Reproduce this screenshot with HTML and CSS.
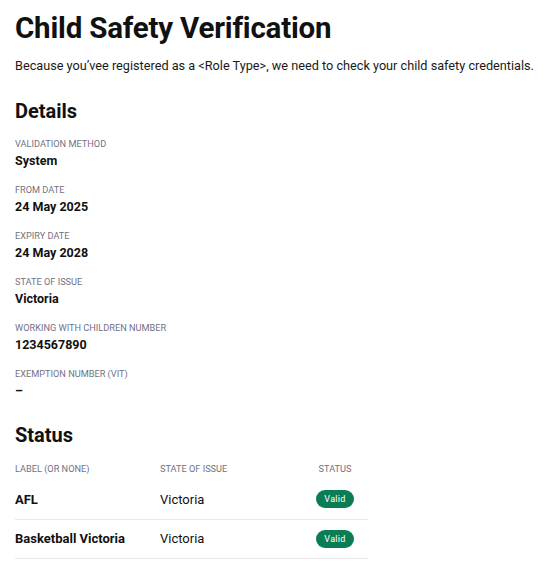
FILE: index.html
```html
<!DOCTYPE html>
<html>
<head>
<meta charset="utf-8">
<link rel="stylesheet" href="styles.css">
</head>
<body>
<main class="page">
  <h1 class="title">Child Safety Verification</h1>
  <p class="intro">Because you’vee registered as a &lt;Role Type&gt;, we need to check your child safety credentials.</p>

  <h2 class="section-title">Details</h2>
  <dl class="details">
    <div class="field"><dt>VALIDATION METHOD</dt><dd>System</dd></div>
    <div class="field"><dt>FROM DATE</dt><dd>24 May 2025</dd></div>
    <div class="field"><dt>EXPIRY DATE</dt><dd>24 May 2028</dd></div>
    <div class="field"><dt>STATE OF ISSUE</dt><dd>Victoria</dd></div>
    <div class="field"><dt>WORKING WITH CHILDREN NUMBER</dt><dd>1234567890</dd></div>
    <div class="field"><dt>EXEMPTION NUMBER (VIT)</dt><dd>–</dd></div>
  </dl>

  <h2 class="section-title status-title">Status</h2>
  <table class="status-table">
    <thead>
      <tr><th class="col-label">LABEL (OR NONE)</th><th class="col-state">STATE OF ISSUE</th><th class="col-status">STATUS</th></tr>
    </thead>
    <tbody>
      <tr><td class="col-label name">AFL</td><td class="col-state">Victoria</td><td class="col-status"><span class="badge">Valid</span></td></tr>
      <tr><td class="col-label name">Basketball Victoria</td><td class="col-state">Victoria</td><td class="col-status"><span class="badge">Valid</span></td></tr>
    </tbody>
  </table>
</main>
</body>
</html>
```

FILE: styles.css
```css
* { box-sizing: border-box; }
html, body { margin: 0; padding: 0; background: #fff; }
body {
  font-family: Roboto, "Liberation Sans", sans-serif;
  color: #111;
}
.page { padding: 11px 15px; }
.title {
  margin: 0;
  font-size: 29.5px;
  line-height: 34px;
  font-weight: 700;
  letter-spacing: -0.2px;
}
.intro {
  margin: 12px 0 0;
  font-size: 12.7px;
  line-height: 18px;
  color: #1a1a1a;
}
.section-title {
  margin: 24px 0 0;
  font-size: 20px;
  line-height: 24px;
  font-weight: 700;
}
.details { margin: 14px 0 0; display: flex; flex-direction: column; gap: 14px; }
.field { display: flex; flex-direction: column; gap: 1px; }
.field dt {
  font-size: 9.2px;
  line-height: 14px;
  color: #717182;
}
.field dd {
  margin: 0;
  font-size: 12.5px;
  line-height: 17px;
  font-weight: 700;
}
.status-title { margin-top: 24px; }
.status-table {
  margin-top: 15px;
  width: 353px;
  border-collapse: collapse;
}
.status-table th {
  font-size: 9.2px;
  line-height: 14px;
  font-weight: 400;
  color: #717182;
  text-align: left;
  padding: 0 0 4px;
}
.status-table td {
  font-size: 13px;
  height: 39px;
  padding: 0;
  border-bottom: 1.5px solid #e9e9e9;
}
.status-table .name { font-weight: 700; }
.col-label { width: 145px; }
.col-state { width: 142px; }
.status-table .col-status { text-align: center; width: 66px; }
.badge {
  display: inline-block;
  background: #0b7d55;
  color: #fff;
  font-size: 9px;
  line-height: 18px;
  height: 18px;
  padding: 0 8px;
  border-radius: 9px;
  letter-spacing: 0.3px;
}
```
